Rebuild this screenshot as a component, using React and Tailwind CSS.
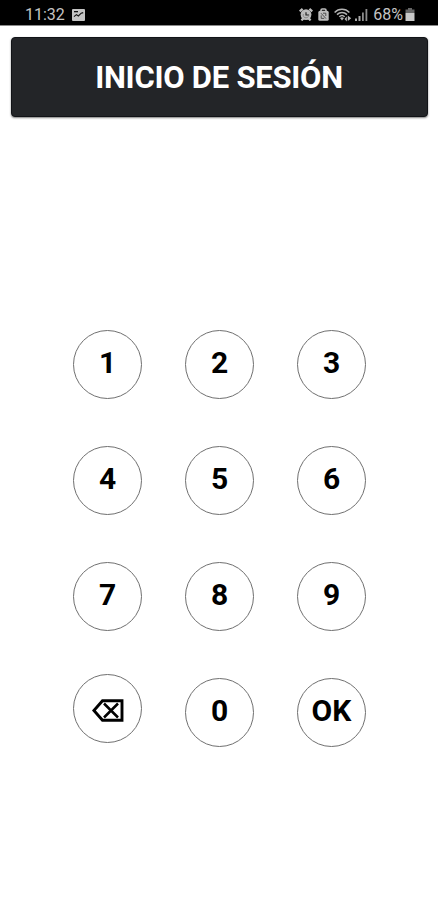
import React, { useState } from 'react';

const TECLAS = ['1', '2', '3', '4', '5', '6', '7', '8', '9', 'borrar', '0', 'OK'];

function ImageIcon() {
  return (
    <svg width="13" height="12" viewBox="0 0 13 12">
      <rect width="13" height="12" rx="1" fill="#c4c4c4" />
      <path d="M2 7.600 4.400 5.600 6.400 7 9.200 4.200 11.200 3.600" stroke="#111" strokeWidth="1.100" fill="none" />
      <path d="M2 2h4v1.300H2z" fill="#111" />
    </svg>
  );
}

function AlarmIcon() {
  return (
    <svg width="14" height="13" viewBox="0 0 14 13">
      <path d="M.7 3.400 3.600.900M13.300 3.400 10.400.900M2.400 12.400l2-2M11.600 12.400l-2-2" stroke="#bdbdbd" strokeWidth="2.200" />
      <circle cx="7" cy="6.600" r="5.400" fill="#bdbdbd" />
      <path d="M4.400 6a2.800 2.800 0 1 0 5.200 0" stroke="#777" strokeWidth=".7" fill="none" />
      <path d="M7 4.200V7h2.600" stroke="#222" strokeWidth="1.200" fill="none" />
    </svg>
  );
}

function BagIcon() {
  return (
    <svg width="11" height="13" viewBox="0 0 11 13">
      <path d="M3 3.500V2.200A1.200 1.200 0 0 1 4.200 1h2.600A1.200 1.200 0 0 1 8 2.200v1.300" stroke="#bdbdbd" strokeWidth="1.600" fill="none" />
      <rect x=".3" y="2.800" width="10.400" height="10" rx="1.600" fill="#bdbdbd" />
      <path d="M3 5.200 8 10.600M3.200 7.400v3h3M5 5.200h2.800V8" stroke="#444" strokeWidth=".9" fill="none" />
    </svg>
  );
}

function WifiIcon() {
  return (
    <svg width="18" height="14" viewBox="0 0 18 14">
      <g fill="none" stroke="#b5b5b5" strokeWidth="1.500">
        <path d="M.6 4.400C4.700.200 11.300.200 15.400 4.400" />
        <path d="M3 6.600c2.900-2.800 7.100-2.800 10 0" />
        <path d="M5.300 8.800c1.600-1.500 3.800-1.500 5.400 0" />
      </g>
      <path d="M6 10 8 12.600 10 10Q8 8.700 6 10z" fill="#b5b5b5" />
      <path d="M12.800 8.400v5l-2.300-2.500zM13.800 7.600l3.400 2.700-3.400 2.700z" fill="#b5b5b5" />
    </svg>
  );
}

function SignalIcon() {
  return (
    <svg width="13" height="12" viewBox="0 0 13 12">
      <path d="M0 9.500h2V12H0zM3.500 7h2v5h-2z" fill="#aaa" />
      <path d="M7 3.500h1.800V12H7zM10.500 0h1.800v12h-1.800z" fill="#8c8c8c" />
    </svg>
  );
}

function BatteryIcon() {
  return (
    <svg width="10" height="13" viewBox="0 0 10 13">
      <path d="M3 0h4v1.500h2.500V5H.5V1.500H3z" fill="#666" />
      <path d="M.5 5h9v8h-9z" fill="#c8c8c8" />
    </svg>
  );
}

function BackspaceIcon() {
  return (
    <svg width="32" height="23" viewBox="0 0 32 23" fill="none" stroke="#000">
      <path d="M10.500 1.700H30V21.300H10.500L1.900 11.500z" strokeWidth="2.900" />
      <path d="M12 4.500 26 18.500M26 4.500 12 18.500" strokeWidth="2.500" />
    </svg>
  );
}

export default function App() {
  const [pin, setPin] = useState('');

  const handleTecla = (tecla) => {
    if (tecla === 'borrar') {
      setPin(pin.slice(0, -1));
      return;
    }
    if (tecla === 'OK') {
      setPin('');
      return;
    }
    setPin(pin + tecla);
  };

  return (
    <div className="min-h-screen bg-white font-['Roboto',sans-serif]">
      {/* Barra de estado */}
      <div className="flex h-[26px] items-center justify-between border-b border-[#8a8a8a] bg-black pt-[4px] pr-[23px] pl-[25px] text-base text-[#c4c4c4]">
        <div className="flex items-center gap-[7px]">
          <span>11:32</span>
          <ImageIcon />
        </div>
        <div className="flex items-center">
          <AlarmIcon />
          <span className="ml-[5px] flex"><BagIcon /></span>
          <span className="ml-[5px] flex"><WifiIcon /></span>
          <span className="ml-[3px] flex"><SignalIcon /></span>
          <span className="ml-[5px]">68%</span>
          <span className="ml-[2px] flex"><BatteryIcon /></span>
        </div>
      </div>

      <header className="mx-auto mt-[11px] flex h-[80px] w-[417px] items-center justify-center rounded-[4px] border border-[#111317] bg-[#232528] shadow-[0_1px_2px_rgba(0,0,0,0.5)]">
        <h1 className="mt-[2px] text-[31px] font-bold tracking-[-0.25px] text-white">INICIO DE SESIÓN</h1>
      </header>

      {/* Teclado numérico */}
      <main className="mt-[213px] ml-[73px] grid w-[293px] grid-cols-3 gap-x-[43px] gap-y-[47px]">
        {TECLAS.map(tecla => (
          <button
            key={tecla}
            onClick={() => handleTecla(tecla)}
            aria-label={tecla}
            className={`flex size-[69px] items-center justify-center rounded-full border border-[#707070] text-[30px] font-bold text-black ${tecla === 'borrar' ? '-mt-[4px] pt-[3px] pl-[1px]' : ''}`}
          >
            {tecla === 'borrar' ? <BackspaceIcon /> : <span className="-mt-[4px]">{tecla}</span>}
          </button>
        ))}
      </main>
    </div>
  );
}
